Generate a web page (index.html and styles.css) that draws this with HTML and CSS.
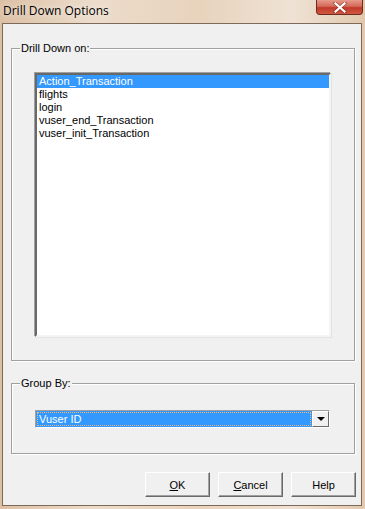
FILE: index.html
```html
<!DOCTYPE html>
<html>
<head>
<meta charset="utf-8">
<link rel="stylesheet" href="styles.css">
</head>
<body>
<div class="window">
  <div class="titlebar">
    <span class="title">Drill Down Options</span>
    <div class="close">
      <svg width="14" height="11" viewBox="0 0 14 11"><path d="M2 1 L12 10 M12 1 L2 10" stroke="#5a1a14" stroke-width="3.6" stroke-linecap="round" opacity="0.45"/><path d="M2.5 1.5 L11.5 9.5 M11.5 1.5 L2.5 9.5" stroke="#ffffff" stroke-width="2.2" stroke-linecap="square"/></svg>
    </div>
  </div>
  <div class="client">
    <div class="group group-drill">
      <span class="group-label">Drill Down on:</span>
      <div class="listbox">
        <div class="item selected">Action_Transaction</div>
        <div class="item">flights</div>
        <div class="item">login</div>
        <div class="item">vuser_end_Transaction</div>
        <div class="item">vuser_init_Transaction</div>
      </div>
    </div>
    <div class="group group-by">
      <span class="group-label">Group By:</span>
      <div class="combo">
        <div class="combo-value"><span class="focus">Vuser ID</span></div>
        <div class="combo-btn"><span class="arrow"></span></div>
      </div>
    </div>
    <div class="buttons">
      <div class="btn"><u>O</u>K</div>
      <div class="btn"><u>C</u>ancel</div>
      <div class="btn">Help</div>
    </div>
  </div>
</div>
</body>
</html>
```
FILE: styles.css
```css
html, body {
  margin: 0;
  padding: 0;
}
body {
  width: 365px;
  height: 509px;
  overflow: hidden;
  font-family: "Liberation Sans", Arial, sans-serif;
  font-size: 11px;
  color: #000;
}
.window {
  width: 365px;
  height: 509px;
  box-sizing: border-box;
  padding: 0 3px 3px 2px;
  display: flex;
  flex-direction: column;
  background: linear-gradient(90deg, #dcc0a4 0%, #ecdccb 25%, #e8d3bd 55%, #efe2d4 80%, #e2c8ae 100%);
}
.titlebar {
  height: 23px;
  display: flex;
  align-items: flex-start;
  justify-content: space-between;
  flex: none;
}
.title {
  font-family: "Open Sans", "Noto Sans", sans-serif;
  font-size: 12px;
  line-height: 14px;
  padding: 4px 0 0 1px;
  color: #000;
  text-shadow: 0 0 6px rgba(255,255,255,0.9);
}
.close {
  width: 47px;
  height: 15px;
  margin-right: -1px;
  box-sizing: border-box;
  border: 1px solid #6e2a20;
  border-top: none;
  border-radius: 0 0 4px 4px;
  background: linear-gradient(180deg, #e79a8c 0%, #d46a58 45%, #c0392b 55%, #d2563f 100%);
  display: flex;
  align-items: center;
  justify-content: center;
}
.client {
  flex: 1;
  border: 1px solid #7d6a58;
  background: #f0f0f0;
  display: flex;
  flex-direction: column;
}
.group {
  position: relative;
  margin-left: 8px;
  width: 344px;
  box-sizing: border-box;
  border: 1px solid #a0a0a0;
  box-shadow: inset 1px 1px 0 #fff, 1px 1px 0 #fff;
}
.group-label {
  position: absolute;
  top: -7px;
  left: 8px;
  padding: 0 1px;
  line-height: 13px;
  background: #f0f0f0;
}
.group-drill {
  margin-top: 24px;
  height: 313px;
}
.listbox {
  margin: 24px 0 0 23px;
  width: 296px;
  height: 264px;
  box-sizing: border-box;
  background: #fff;
  border-style: solid;
  border-width: 2px;
  border-color: #696969 #f4f4f4 #f4f4f4 #696969;
  box-shadow: -1px -1px 0 #a0a0a0, 1px 1px 0 #e3e3e3;
  display: flex;
  flex-direction: column;
}
.item {
  height: 13px;
  line-height: 13px;
  padding-left: 2px;
  white-space: nowrap;
}
.item.selected {
  background: #3399ff;
  color: #fff;
}
.group-by {
  margin-top: 22px;
  height: 71px;
}
.combo {
  margin: 26px 0 0 23px;
  width: 295px;
  height: 18px;
  box-sizing: border-box;
  display: flex;
  border-style: solid;
  border-width: 1px;
  border-color: #a0a0a0 #fff #fff #a0a0a0;
  background: #fff;
}
.combo-value {
  flex: 1;
  background: #3399ff;
  color: #fff;
  padding: 1px;
  display: flex;
}
.focus {
  flex: 1;
  border: 1px dotted #f2b56a;
  line-height: 12px;
  padding-left: 1px;
}
.combo-btn {
  width: 17px;
  box-sizing: border-box;
  background: #f0f0f0;
  border-style: solid;
  border-width: 1px;
  border-color: #fff #696969 #696969 #fff;
  display: flex;
  align-items: center;
  justify-content: center;
}
.arrow {
  width: 0;
  height: 0;
  border-left: 4px solid transparent;
  border-right: 4px solid transparent;
  border-top: 4px solid #000;
}
.buttons {
  margin-top: 18px;
  display: flex;
  justify-content: flex-end;
  gap: 8px;
  padding-right: 5px;
}
.btn {
  width: 65px;
  height: 25px;
  box-sizing: border-box;
  background: #f0f0f0;
  border-style: solid;
  border-width: 1px;
  border-color: #fff #696969 #696969 #fff;
  box-shadow: inset -1px -1px 0 #a0a0a0;
  display: flex;
  align-items: center;
  justify-content: center;
  font-size: 11px;
}
.btn u {
  text-decoration: underline;
}
```
